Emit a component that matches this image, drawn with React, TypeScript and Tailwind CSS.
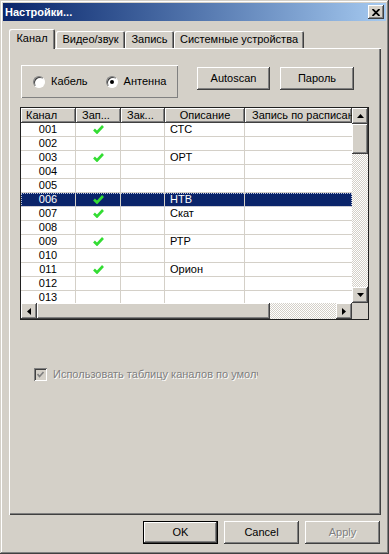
const raised =
  "shadow-[inset_-1px_-1px_#404040,inset_1px_1px_#ffffff,inset_-2px_-2px_#808080]";
const checker =
  "bg-[repeating-conic-gradient(#d4d0c8_0%_25%,#ffffff_0%_50%)] bg-[length:2px_2px]";

type Row = { ch: string; rec: boolean; name: string };

const rows: Row[] = [
  { ch: "001", rec: true, name: "СТС" },
  { ch: "002", rec: false, name: "" },
  { ch: "003", rec: true, name: "ОРТ" },
  { ch: "004", rec: false, name: "" },
  { ch: "005", rec: false, name: "" },
  { ch: "006", rec: true, name: "НТВ" },
  { ch: "007", rec: true, name: "Скат" },
  { ch: "008", rec: false, name: "" },
  { ch: "009", rec: true, name: "РТР" },
  { ch: "010", rec: false, name: "" },
  { ch: "011", rec: true, name: "Орион" },
  { ch: "012", rec: false, name: "" },
  { ch: "013", rec: false, name: "" },
];

function Check() {
  return (
    <svg width="11" height="9" viewBox="0 0 11 9">
      <path d="M1 4.5 L4 7.5 L10 1" fill="none" stroke="#33dd33" strokeWidth="2.6" />
    </svg>
  );
}

function Arrow({ dir }: { dir: "up" | "down" | "left" | "right" }) {
  const pts = {
    up: "0,4 7,4 3.5,0",
    down: "0,0 7,0 3.5,4",
    left: "4,0 4,7 0,3.5",
    right: "0,0 0,7 4,3.5",
  }[dir];
  const vertical = dir === "up" || dir === "down";
  return (
    <svg width={vertical ? 7 : 4} height={vertical ? 4 : 7} viewBox={vertical ? "0 0 7 4" : "0 0 4 7"}>
      <polygon points={pts} fill="#000" />
    </svg>
  );
}

function Button({ label, isDefault, disabled }: { label: string; isDefault?: boolean; disabled?: boolean }) {
  return (
    <div
      className={`flex h-[23px] w-[75px] items-center justify-center bg-[#d4d0c8] ${
        isDefault ? "border border-black" : ""
      }`}
    >
      <div className={`flex h-full w-full items-center justify-center ${raised}`}>
        <span className={disabled ? "text-[#808080] [text-shadow:1px_1px_0_#ffffff]" : "text-black"}>
          {label}
        </span>
      </div>
    </div>
  );
}

function Radio({ checked, label }: { checked?: boolean; label: string }) {
  return (
    <div className="flex items-center">
      <div className="flex h-[12px] w-[12px] items-center justify-center rounded-full border border-t-[#808080] border-l-[#808080] border-r-white border-b-white bg-white shadow-[inset_1px_1px_#404040]">
        {checked && <div className="h-[4px] w-[4px] rounded-full bg-black" />}
      </div>
      <span className="ml-[6px]">{label}</span>
    </div>
  );
}

export default function App() {
  return (
    <div className="h-[554px] w-[389px] bg-[#d4d0c8] p-[3px] font-['Liberation_Sans',Arial,sans-serif] text-[11px] leading-[13px] text-black shadow-[inset_-1px_-1px_#404040,inset_1px_1px_#d4d0c8,inset_-2px_-2px_#808080,inset_2px_2px_#ffffff]">
      <div className="flex h-[18px] items-center justify-between bg-gradient-to-r from-[#0a246a] to-[#a6caf0] pl-[2px] pr-[2px]">
        <span className="font-bold text-white">Настройки...</span>
        <div className={`flex h-[14px] w-[16px] items-center justify-center bg-[#d4d0c8] ${raised}`}>
          <svg width="8" height="7" viewBox="0 0 8 7">
            <path d="M0.5 0 L7.5 7 M7.5 0 L0.5 7" stroke="#000" strokeWidth="1.8" />
          </svg>
        </div>
      </div>

      <div className="mt-[8px] flex h-[19px] items-end pl-[6px]">
        <div className="relative z-10 -mb-[1px] flex h-[20px] w-[46px] items-center justify-center rounded-t-[2px] bg-[#d4d0c8] pb-[2px] shadow-[inset_1px_1px_#ffffff,inset_-1px_0_#404040,inset_-2px_0_#808080]">
          Канал
        </div>
        <div className="ml-[1px] flex h-[17px] w-[69px] items-center justify-center rounded-t-[2px] shadow-[inset_1px_1px_#ffffff,inset_-1px_0_#404040,inset_-2px_0_#808080]">
          Видео/звук
        </div>
        <div className="flex h-[17px] w-[49px] items-center justify-center rounded-t-[2px] shadow-[inset_1px_1px_#ffffff,inset_-1px_0_#404040,inset_-2px_0_#808080]">
          Запись
        </div>
        <div className="flex h-[17px] w-[130px] items-center justify-center rounded-t-[2px] shadow-[inset_1px_1px_#ffffff,inset_-1px_0_#404040,inset_-2px_0_#808080]">
          Системные устройства
        </div>
      </div>

      <div className="ml-[6px] flex h-[467px] w-[372px] flex-col pl-[11px] pt-[17px] shadow-[inset_1px_1px_#ffffff,inset_-1px_-1px_#404040,inset_-2px_-2px_#808080]">
        <div className="flex items-start">
          <div className="ml-[1px] flex h-[33px] w-[157px] items-center gap-[18px] pl-[12px] shadow-[inset_1px_1px_#ffffff,inset_-1px_-1px_#808080]">
            <Radio label="Кабель" />
            <Radio checked label="Антенна" />
          </div>
          <div className="ml-[19px] mt-[2px] flex gap-[10px]">
            <div className={`flex h-[23px] w-[73px] items-center justify-center ${raised}`}>Autoscan</div>
            <div className={`flex h-[23px] w-[74px] items-center justify-center ${raised}`}>Пароль</div>
          </div>
        </div>

        <div className="mt-[9px] flex h-[213px] w-[349px] flex-col border border-[#202020] bg-white">
          <div className="flex h-[195px]">
            <div className="w-[331px] overflow-hidden">
              <div className="flex h-[15px] bg-[#d4d0c8]">
                <div className={`w-[55px] pl-[5px] pt-[1px] ${raised}`}>Канал</div>
                <div className={`w-[45px] pl-[6px] pt-[1px] ${raised}`}>Зап...</div>
                <div className={`w-[44px] pl-[6px] pt-[1px] ${raised}`}>Зак...</div>
                <div className={`w-[80px] pt-[1px] text-center ${raised}`}>Описание</div>
                <div className={`w-[107px] overflow-hidden whitespace-nowrap pl-[7px] pt-[1px] ${raised}`}>
                  Запись по расписанию
                </div>
              </div>
              {rows.map((r) => {
                const sel = r.ch === "006";
                return (
                  <div
                    key={r.ch}
                    className={`flex h-[14px] border-b border-[#d4d0c8] ${
                      sel ? "bg-[#0a246a] text-white outline-1 -outline-offset-1 outline-dotted outline-[#c0c8e0]" : ""
                    }`}
                  >
                    <div className="w-[55px] border-r border-[#d4d0c8] text-center">{r.ch}</div>
                    <div className="flex w-[45px] items-center justify-center border-r border-[#d4d0c8]">
                      {r.rec && <Check />}
                    </div>
                    <div className="w-[44px] border-r border-[#d4d0c8]" />
                    <div className="w-[80px] border-r border-[#d4d0c8] pl-[5px]">{r.name}</div>
                    <div className="w-[107px]" />
                  </div>
                );
              })}
            </div>
            <div className="flex w-[16px] flex-col">
              <div className={`flex h-[16px] items-center justify-center bg-[#d4d0c8] ${raised}`}>
                <Arrow dir="up" />
              </div>
              <div className={`h-[30px] bg-[#d4d0c8] ${raised}`} />
              <div className={`flex-1 ${checker}`} />
              <div className={`flex h-[16px] items-center justify-center bg-[#d4d0c8] ${raised}`}>
                <Arrow dir="down" />
              </div>
            </div>
          </div>
          <div className="flex h-[16px]">
            <div className={`flex w-[16px] items-center justify-center bg-[#d4d0c8] ${raised}`}>
              <Arrow dir="left" />
            </div>
            <div className={`w-[233px] bg-[#d4d0c8] ${raised}`} />
            <div className={`flex-1 ${checker}`} />
            <div className={`flex w-[16px] items-center justify-center bg-[#d4d0c8] ${raised}`}>
              <Arrow dir="right" />
            </div>
            <div className="w-[16px] bg-[#d4d0c8]" />
          </div>
        </div>

        <div className="ml-[14px] mt-[48px] flex items-center">
          <div className="flex h-[13px] w-[13px] items-center justify-center bg-[#d4d0c8] shadow-[inset_1px_1px_#808080,inset_-1px_-1px_#ffffff,inset_2px_2px_#404040,inset_-2px_-2px_#d4d0c8]">
            <svg width="7" height="7" viewBox="0 0 7 7">
              <path d="M0.5 3 L2.5 5.5 L6.5 1" fill="none" stroke="#808080" strokeWidth="1.6" />
            </svg>
          </div>
          <span className="ml-[6px] w-[205px] overflow-hidden whitespace-nowrap text-[#808080] [text-shadow:1px_1px_0_#ffffff]">
            Использовать таблицу каналов по умолчанию
          </span>
        </div>
      </div>

      <div className="mt-[6px] flex gap-[6px] pl-[140px]">
        <Button label="OK" isDefault />
        <Button label="Cancel" />
        <Button label="Apply" disabled />
      </div>
    </div>
  );
}
